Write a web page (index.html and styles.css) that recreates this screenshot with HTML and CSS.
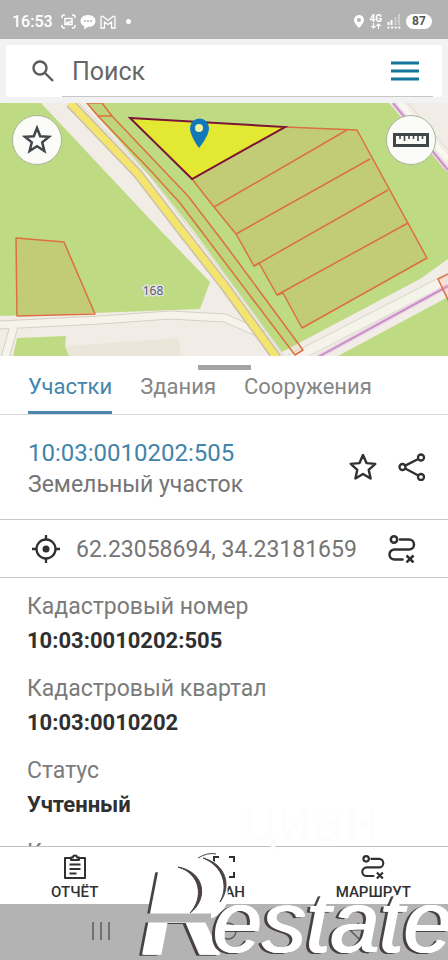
FILE: index.html
```html
<!DOCTYPE html>
<html lang="ru">
<head>
    <meta charset="UTF-8">
    <meta name="viewport" content="width=device-width, initial-scale=1.0">
    <title>Участки</title>
    <link rel="stylesheet" href="styles.css">
</head>
<body>
    <!-- Shared icons -->
    <svg class="sprite" aria-hidden="true">
        <symbol id="star" viewBox="0 0 28 28">
            <path d="M14 2l3.500 8.100 8.800.8-6.600 5.900 1.900 8.700L14 21l-7.600 4.500 1.900-8.700-6.600-5.900 8.800-.8z" fill="none" stroke="currentColor" stroke-width="2.4" stroke-linejoin="round"/>
        </symbol>
        <symbol id="route" viewBox="0 0 28 28">
            <g fill="none" stroke="currentColor" stroke-width="2.5">
                <circle cx="6" cy="4.500" r="3.200"/>
                <path d="M12 4.500H21a5 5 0 0 1 0 10H6.500a5 5 0 0 0 0 10h8" stroke-linecap="round"/>
                <path d="M18.500 20.500l7 7M25.500 20.500l-7 7"/>
            </g>
        </symbol>
    </svg>

    <header class="status-bar">
        <div class="status-group">
            <span class="time">16:53</span>
            <svg width="15" height="15" viewBox="0 0 15 15" fill="none" stroke="#fff" stroke-width="1.5">
                <path d="M1 4V3a2 2 0 0 1 2-2h1M11 1h1a2 2 0 0 1 2 2v1M14 11v1a2 2 0 0 1-2 2h-1M4 14H3a2 2 0 0 1-2-2v-1"/>
                <path d="M4 4.500h7v6H4zM5 10l2-2 1 1 2-2"/>
            </svg>
            <svg width="16" height="16" viewBox="0 0 16 16">
                <path d="M8 1c5 0 7.500 3 7.500 6S13 13 8 13l-4 2.500.5-3C2 11.500.5 9.500.5 7 .5 4 3 1 8 1z" fill="#fff"/>
                <path d="M4 7h2M7 7h2M10 7h2" stroke="#b3b3b3" stroke-width="1.500"/>
            </svg>
            <svg width="16" height="14" viewBox="0 0 16 14" fill="none" stroke="#fff" stroke-width="1.300">
                <path d="M1 13V2l1.500-1L8 5.500 13.500 1 15 2v11h-3.500V7L8 9.500 4.500 7v6z"/>
            </svg>
            <span class="dot"></span>
        </div>
        <div class="status-group status-right">
            <svg width="10" height="13" viewBox="0 0 10 13">
                <path fill="#fff" fill-rule="evenodd" d="M5 0a5 5 0 0 1 5 5c0 3.500-5 8-5 8S0 8.500 0 5a5 5 0 0 1 5-5zm0 3a2 2 0 1 0 0 4 2 2 0 0 0 0-4z"/>
            </svg>
            <span class="network">
                <span>4G</span>
                <svg width="10" height="6" viewBox="0 0 10 6" fill="none" stroke="#fff" stroke-width="1.200">
                    <path d="M2.500 0v5M.5 3l2 2 2-2M7.500 6V1M5.500 3l2-2 2 2"/>
                </svg>
            </span>
            <svg width="14" height="15" viewBox="0 0 14 15">
                <path d="M1.500 8v3M4.500 6v5" stroke="#fff" stroke-width="2"/>
                <path d="M8.500 3v8M12 0v11" stroke="#cfcfcf" stroke-width="2"/>
                <path d="M.5 13.500h13" stroke="#fff" stroke-width="2" stroke-dasharray="2 1.600"/>
            </svg>
            <span class="battery">87</span>
        </div>
    </header>

    <div class="search-wrap">
        <form class="search">
            <label for="query" aria-label="Поиск">
                <svg width="22" height="22" viewBox="0 0 22 22" fill="none" stroke="#5c5c5c" stroke-width="2.400">
                    <circle cx="8" cy="8" r="6.500"/>
                    <path d="M12.500 12.500l8.500 8.500"/>
                </svg>
            </label>
            <div class="search-field">
                <input id="query" type="text" placeholder="Поиск">
                <button type="button" class="icon-btn" aria-label="Меню">
                    <svg width="28" height="20" viewBox="0 0 28 20" stroke="#15749c" stroke-width="3">
                        <path d="M0 2h28M0 10h28M0 18h28"/>
                    </svg>
                </button>
            </div>
        </form>
    </div>

    <main class="map">
        <svg class="map-canvas" viewBox="0 103 448 253" preserveAspectRatio="xMidYMid slice">
            <rect y="103" width="448" height="253" fill="#bedb83"/>
            <!-- Open ground along the roads -->
            <g fill="#f1ede6">
                <path d="M41 103L160 230 210 282 200 309 95 313 0 316V356H338L448 297V259L420 279 282 352 193 230 155 182 86 103z"/>
                <path d="M389 103L448 172V103z"/>
            </g>
            <path d="M17 338l49-2-1 10 4 10H13z" fill="#bedb83"/>
            <path d="M66 346l112-8 3 18H69z" fill="#ebe5da"/>
            <!-- Country roads -->
            <g fill="none" stroke-linejoin="round">
                <path d="M5 358L14 326M0 325L100 320 170 315 225 318 266 336" stroke="#d5d0c5" stroke-width="9"/>
                <path d="M5 358L14 326M0 325L100 320 170 315 225 318 266 336" stroke="#f6f4ea" stroke-width="7"/>
                <path d="M290 360L440 283 448 279" stroke="#d9dccd" stroke-width="11"/>
                <path d="M290 360L440 283 448 279" stroke="#f5f4eb" stroke-width="9"/>
                <path d="M318 357L448 286M393 103L448 170" stroke="#edd9e7" stroke-width="5"/>
                <path d="M318 357L448 286M393 103L448 170" stroke="#c98fc6" stroke-width="2"/>
                <path d="M400 103l48 56" stroke="#faf7ef" stroke-width="5"/>
                <path d="M408 103l40 47" stroke="#e1d5c9"/>
                <!-- Main road -->
                <path d="M70 103L138 174 181 230 224 285 277 358" stroke="#cbbfa9" stroke-width="10"/>
                <path d="M70 103L138 174 181 230 224 285 277 358" stroke="#f4e56e" stroke-width="7"/>
                <path d="M79 103L148 174 191 230 234 287 284 356" stroke="#d8d4ca"/>
            </g>
            <!-- Parcels -->
            <g fill="#cf9a50" fill-opacity=".24" stroke="#dc7040" stroke-width="1.500" stroke-linejoin="round">
                <path d="M192 179L285 127 357 130 427 258 302 328 283 293 277 295 259 263 254 266 236 234 214 207z"/>
                <path d="M87 103L98 116 150 170 180 203 202 232 295 355 303 350 224 243 188 196 112 116 102 103z" fill-opacity=".1"/>
                <path d="M16 238L64 242 95 314 17 316z"/>
                <path d="M450 273l-12 6 12 25z" fill="#ff9d9d"/>
                <path d="M214 207L347 130M236 234L370 159M254 266L388 190M277 295L408 223M98 116h14" fill="none"/>
            </g>
            <path d="M130 118L285 127 192 179z" fill="#e3e833" stroke="#7b1535" stroke-width="2"/>
            <path d="M199 148s-9-12-9-20a9 9 0 0 1 19 0c0 8-10 20-10 20z" fill="#1278b8"/>
            <circle cx="199" cy="128" r="4" fill="#f0f3a0"/>
            <text class="map-label" x="153" y="295">168</text>
        </svg>
        <div class="map-tools">
            <button type="button" class="round-btn" aria-label="Избранное">
                <svg width="30" height="30" viewBox="0 0 30 30" fill="none" stroke="#41464b" stroke-width="2.500">
                    <path d="M15 3l3.200 8.300 8.800.5-6.800 5.600 2.200 8.600-7.400-4.800L7.600 26l2.200-8.600L3 11.800l8.800-.5z"/>
                </svg>
            </button>
            <button type="button" class="round-btn" aria-label="Линейка">
                <svg width="36" height="14" viewBox="0 0 36 14" fill="none" stroke="#41464b">
                    <path d="M1.500 1.500h33v11h-33z" stroke-width="3"/>
                    <path d="M7 2v4M11.500 2v6M16 2v4M20.500 2v4M25 2v6M29.500 2v4" stroke-width="1.600"/>
                </svg>
            </button>
        </div>
    </main>

    <section class="sheet">
        <div class="handle"></div>
        <nav class="tabs">
            <button type="button" class="tab active">Участки</button>
            <button type="button" class="tab">Здания</button>
            <button type="button" class="tab">Сооружения</button>
        </nav>

        <div class="parcel">
            <div class="parcel-name">
                <h1>10:03:0010202:505</h1>
                <p>Земельный участок</p>
            </div>
            <button type="button" class="icon-btn" aria-label="В избранное">
                <svg width="28" height="28"><use href="#star"/></svg>
            </button>
            <button type="button" class="icon-btn" aria-label="Поделиться">
                <svg width="28" height="28" viewBox="0 0 28 28" fill="none" stroke="currentColor" stroke-width="2.300">
                    <circle cx="4.500" cy="14" r="3"/>
                    <circle cx="23" cy="4.500" r="3"/>
                    <circle cx="23" cy="24" r="3"/>
                    <path d="M7.200 12.600L20.300 6M7.200 15.500l13.100 7"/>
                </svg>
            </button>
        </div>

        <div class="coords">
            <svg width="28" height="28" viewBox="0 0 28 28" fill="none" stroke="#303030" stroke-width="2.300">
                <circle cx="14" cy="14" r="9.500"/>
                <circle cx="14" cy="14" r="3.500" fill="#303030" stroke="none"/>
                <path d="M14 0v5M14 23v5M0 14h5M23 14h5"/>
            </svg>
            <span class="coords-value">62.23058694, 34.23181659</span>
            <button type="button" class="icon-btn" aria-label="Маршрут">
                <svg width="28" height="28"><use href="#route"/></svg>
            </button>
        </div>

        <dl class="fields">
            <dt>Кадастровый номер</dt>
            <dd>10:03:0010202:505</dd>
            <dt>Кадастровый квартал</dt>
            <dd>10:03:0010202</dd>
            <dt>Статус</dt>
            <dd>Учтенный</dd>
            <dt>К</dt>
        </dl>
    </section>

    <nav class="bottom-nav">
        <button type="button">
            <svg width="24" height="26" viewBox="0 0 24 26" fill="none" stroke="currentColor" stroke-width="2">
                <path d="M8 4H2v20h20V4h-6M8 6V3.500h2a2 2 0 0 1 4 0h2V6z" stroke-linejoin="round"/>
                <path d="M6.500 10.500h11M6.500 15h11M6.500 19.500h7"/>
            </svg>
            <span>ОТЧЁТ</span>
        </button>
        <button type="button">
            <svg width="24" height="26" viewBox="0 0 24 26" fill="none" stroke="currentColor" stroke-width="2">
                <path d="M2 8V3h5M17 3h5v5M22 18v5h-5M7 23H2v-5"/>
            </svg>
            <span>ПЛАН</span>
        </button>
        <button type="button">
            <svg width="24" height="26"><use href="#route"/></svg>
            <span>МАРШРУТ</span>
        </button>
    </nav>

    <footer class="system-nav">
        <svg width="18" height="18" viewBox="0 0 18 18"><path d="M1 0v18M9 0v18M17 0v18"/></svg>
        <svg width="18" height="18" viewBox="0 0 18 18"><circle cx="9" cy="9" r="8"/></svg>
        <svg width="18" height="18" viewBox="0 0 18 18"><path d="M13 1L5 9l8 8"/></svg>
    </footer>

    <!-- Watermark over the lower part of the screen -->
    <div class="watermark" aria-hidden="true">
        <span class="mark faint">циан</span>
        <span class="mark mark-big">R</span>
        <svg width="448" height="190" viewBox="0 0 448 190">
            <path d="M178 98C190 92 200 86 212 90 226 98 232 120 222 134 215 146 205 148 192 146z" fill="#fff"/>
            <path d="M203 88C226 94 232 116 220 132 229 116 223 96 203 88z" fill="#4a4242" stroke="#4a4242"/>
            <path d="M198 88Q208 82 216 84" fill="none" stroke="#4a4242"/>
            <path d="M162 98H178C204 102 208 130 190 143H152z" fill="#fff"/>
            <path d="M178 97C206 102 208 130 190 143 204 128 201 104 178 97z" fill="#4a4242" stroke="#4a4242"/>
            <path d="M145 148h66" stroke="#b3b3b3" stroke-width="9"/>
        </svg>
        <span class="mark mark-rest">estate</span>
    </div>
</body>
</html>
```
FILE: styles.css
```css
* {
    margin: 0;
    padding: 0;
    box-sizing: border-box;
}

body {
    position: relative;
    display: flex;
    flex-direction: column;
    height: 100vh;
    overflow: hidden;
    font-family: Roboto, "Noto Sans", sans-serif;
    background-color: #fff;
    color: #303030;
}

button {
    border: none;
    background: none;
    font-family: inherit;
    color: inherit;
    cursor: pointer;
}

svg {
    display: block;
    flex-shrink: 0;
}

.sprite {
    position: absolute;
    width: 0;
    height: 0;
}

.icon-btn {
    flex-shrink: 0;
}

/* Phone status bar */
.status-bar {
    display: flex;
    flex-shrink: 0;
    justify-content: space-between;
    align-items: center;
    height: 39px;
    padding: 4px 16px 0 12px;
    background-color: #b3b3b3;
    color: #fff;
}

.status-group {
    display: flex;
    align-items: center;
    gap: 4px;
}

.time {
    margin-right: 4px;
    font-size: 16px;
    font-weight: 500;
}

.dot {
    width: 5px;
    height: 5px;
    margin-left: 6px;
    border-radius: 50%;
    background-color: #fff;
}

.status-right {
    gap: 5px;
}

.network {
    display: flex;
    flex-direction: column;
    align-items: center;
    font-size: 10px;
    font-weight: 700;
    line-height: 9px;
}

.battery {
    width: 26px;
    border-radius: 8px;
    background-color: #fff;
    color: #555;
    font-size: 12px;
    font-weight: 700;
    line-height: 15px;
    text-align: center;
}

/* Search */
.search-wrap {
    flex-shrink: 0;
    padding: 6px;
    background-color: #f2f2f2;
}

.search {
    display: flex;
    align-items: center;
    gap: 8px;
    height: 52px;
    padding: 0 9px 0 26px;
    border-radius: 2px;
    background-color: #fff;
}

.search-field {
    display: flex;
    flex: 1;
    align-items: center;
    min-width: 0;
    height: 52px;
    padding: 0 14px 0 10px;
    border-bottom: 1px solid #c8c8c8;
}

.search-field input {
    flex: 1;
    min-width: 0;
    padding-top: 2px;
    border: none;
    outline: none;
    font-family: inherit;
    font-size: 25px;
}

.search-field input::placeholder {
    color: #666;
    opacity: 1;
}

/* Map */
.map {
    position: relative;
    flex-shrink: 0;
    height: 253px;
}

.map-canvas {
    width: 100%;
    height: 100%;
}

.map-label {
    font-family: "Noto Sans", sans-serif;
    font-size: 12px;
    fill: #555a6e;
    stroke: #e4e4e4;
    stroke-width: 3px;
    paint-order: stroke;
    text-anchor: middle;
}

.map-tools {
    position: absolute;
    top: 12px;
    left: 12px;
    right: 12px;
    display: flex;
    justify-content: space-between;
}

.round-btn {
    display: flex;
    justify-content: center;
    align-items: center;
    width: 50px;
    height: 50px;
    border: 1px solid #a9b39b;
    border-radius: 50%;
    background-color: #fbfcf8;
}

/* Sheet with the parcel details */
.sheet {
    display: flex;
    flex: 1;
    flex-direction: column;
    min-height: 0;
    overflow: hidden;
}

.handle {
    flex-shrink: 0;
    align-self: center;
    width: 53px;
    height: 5px;
    margin-top: 9px;
    background-color: #a6a3a4;
}

.tabs {
    display: flex;
    flex-shrink: 0;
    gap: 28px;
    height: 45px;
    padding: 0 28px;
    border-bottom: 1px solid #dadada;
}

.tab {
    padding-bottom: 8px;
    border-bottom: 3px solid transparent;
    font-size: 22px;
    color: #858585;
}

.tab.active {
    border-bottom-color: #4a86ad;
    color: #4586ac;
}

.parcel {
    display: flex;
    flex-shrink: 0;
    align-items: center;
    gap: 21px;
    height: 105px;
    padding: 0 22px 0 28px;
    border-bottom: 1px solid #c8c8c8;
}

.parcel-name {
    flex: 1;
    padding-top: 4px;
}

.parcel-name h1 {
    font-size: 24px;
    font-weight: 400;
    line-height: 32px;
    color: #3f84ab;
}

.parcel-name p {
    font-size: 23px;
    line-height: 32px;
    color: #757575;
}

.coords {
    display: flex;
    flex-shrink: 0;
    align-items: center;
    gap: 16px;
    height: 58px;
    padding: 0 32px;
    border-bottom: 1px solid #c8c8c8;
}

.coords-value {
    flex: 1;
    padding-top: 2px;
    font-size: 23px;
    color: #757575;
}

.fields {
    padding: 12px 27px 0;
    font-size: 22px;
    line-height: 34px;
}

.fields dt {
    font-size: 23px;
    color: #7b7b7b;
}

.fields dd {
    margin-bottom: 14px;
    font-weight: 700;
}

/* Bottom navigation */
.bottom-nav {
    display: flex;
    flex-shrink: 0;
    height: 58px;
    border-top: 1px solid #c0c0c0;
    background-color: #fff;
}

.bottom-nav button {
    display: flex;
    flex: 1;
    flex-direction: column;
    align-items: center;
    gap: 2px;
    padding-top: 7px;
    font-size: 15px;
    font-weight: 500;
    line-height: 20px;
}

.system-nav {
    display: flex;
    flex-shrink: 0;
    justify-content: space-between;
    height: 56px;
    padding: 18px 84px 0 92px;
    background-color: #b3b3b3;
}

.system-nav svg {
    fill: none;
    stroke: #5c5c5c;
    stroke-width: 1.5px;
}

/* Watermark */
.watermark {
    position: absolute;
    right: 0;
    bottom: 0;
    width: 448px;
    height: 190px;
    pointer-events: none;
}

.watermark svg {
    position: absolute;
    top: 0;
    left: 0;
}

.mark {
    position: absolute;
    font-family: "Liberation Sans", sans-serif;
    font-style: italic;
    line-height: 1;
    color: #fff;
    text-shadow: 1px 0 0 #fff, 2px 0 0 #fff, -2px 1px 0 #4a4242, -3px 1px 0 #4a4242;
}

.mark-big {
    top: 83px;
    left: 140px;
    font-size: 120px;
    font-weight: 700;
}

.mark-rest {
    top: 108px;
    left: 212px;
    font-size: 88px;
}

.faint {
    top: 20px;
    left: 242px;
    font-family: Roboto, sans-serif;
    font-size: 60px;
    font-style: normal;
    color: #fdfdfd;
    text-shadow: none;
}
```
